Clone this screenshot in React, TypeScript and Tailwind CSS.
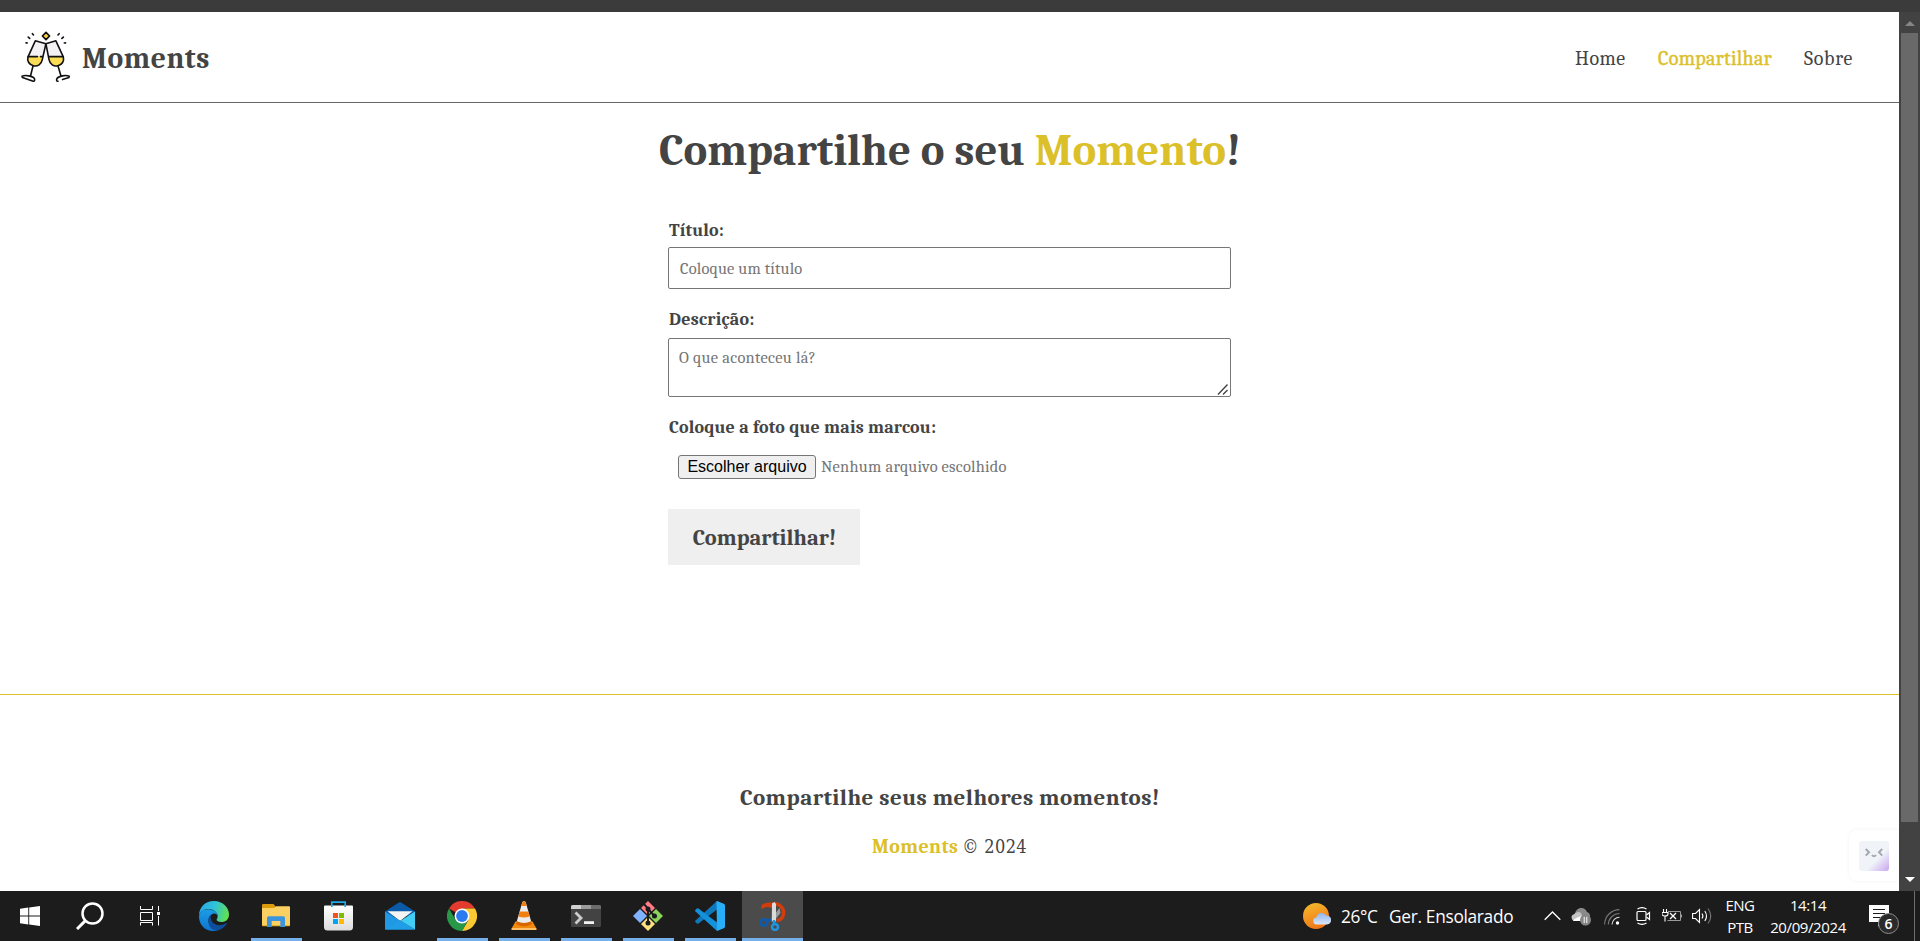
import type { ReactNode } from "react";

function ToastLogo() {
  return (
    <svg width="50" height="52" viewBox="0 0 50 52" fill="none" stroke="#111" strokeWidth="1.6" strokeLinecap="round" strokeLinejoin="round">
      <path d="M25 1.4L28.6 5L25 8.6L21.4 5Z" fill="#f7d23e" strokeWidth="1.7" />
      <path d="M14.3 9.8L25 12.5L21.3 28.6C20.4 33.4 16.6 35.8 12.4 34.8C8.1 33.8 5.9 30 7 25.8Z" fill="#f3f1f3" stroke="none" />
      <path d="M34.9 9.8L24.3 12.5L28 28.6C29 33.4 32.7 35.8 36.9 34.8C41.2 33.8 43.4 30 42.3 25.8Z" fill="#f3f1f3" stroke="none" />
      <path d="M6.9 25.6H21.9C21.8 32 18 35.5 13.4 35C8.7 34.4 6.2 30.6 6.9 25.6Z" fill="#fbdc55" stroke="none" />
      <path d="M27.3 25.6H42.5C43.2 30.6 40.6 34.4 36 35C31.3 35.5 27.5 32 27.3 25.6Z" fill="#fbdc55" stroke="none" />
      <path d="M14.3 9.8L24.9 12.7L21.3 28.6C20.4 33.4 16.6 35.8 12.4 34.8C8.1 33.8 5.9 30 7 25.8Z" />
      <path d="M34.9 9.8L24.9 12.7L28 28.6C29 33.4 32.7 35.8 36.9 34.8C41.2 33.8 43.4 30 42.3 25.8Z" />
      <path d="M7 25.6H16.5M19.5 25.6H21.3M28 25.6H42" />
      <path d="M12 35L9.5 45M37 35L40 45" />
      <path d="M1 45.3C4 43.7 12 45 13.4 47.6C14 49.4 13.5 50.5 12.2 50.2L1.4 46.5Z" />
      <path d="M48.3 45.3C45 43.7 37.5 45 35.9 47.6C35.2 49.4 35.7 50.5 37 50.2M41.5 48.6L48 46.5" />
      <path d="M12.5 4L11.4 2.7M8.7 7.4L7.2 6.1M6.3 12L5 11.9M37 4L38.1 2.7M40.9 7.4L42.4 6.1M43.3 12L44.6 11.9" />
    </svg>
  );
}

function StartIcon() {
  return (
    <svg width="20" height="20" viewBox="0 0 20 20" fill="#fff">
      <path d="M0 2.7L8.3 1.5V9.5H0ZM9.2 1.4L20 0V9.5H9.2ZM0 10.4H8.3V18.5L0 17.3ZM9.2 10.4H20V20L9.2 18.6Z" />
    </svg>
  );
}

function SearchIcon() {
  return (
    <svg width="28" height="28" viewBox="0 0 28 28" fill="none" stroke="#fff" strokeWidth="2.5">
      <circle cx="16.5" cy="11.5" r="10" />
      <path d="M9.4 18.6L1 27" strokeWidth="3" />
    </svg>
  );
}

function TaskViewIcon() {
  return (
    <svg width="20" height="20" viewBox="0 0 20 20" fill="none" stroke="#fff" strokeWidth="1">
      <path d="M.5 0V3.500H12.500V0M.5 6.500H12.500V14.500H.5ZM.5 19.500V16.500H12.500V19.500M18.500 0V5M18.500 10V19.500" />
      <rect x="17" y="6" width="3" height="3" fill="#fff" stroke="none" />
    </svg>
  );
}

function EdgeIcon() {
  return (
    <svg width="30" height="30" viewBox="0 0 30 30">
      <defs>
        <linearGradient id="edgeTop" x1="0" y1="0.3" x2="1" y2="0.5">
          <stop offset="0" stopColor="#2aa7e8" />
          <stop offset=".5" stopColor="#2fc3d8" />
          <stop offset="1" stopColor="#63e04e" />
        </linearGradient>
        <linearGradient id="edgeLeft" x1="0" y1="0" x2="0" y2="1">
          <stop offset="0" stopColor="#1c9ee6" />
          <stop offset="1" stopColor="#0f73cd" />
        </linearGradient>
      </defs>
      <path d="M0 14.500C0 6 6.500 0 15 0C24 0 30 6.500 30 13.500C30 18.500 26.500 21 22.500 21C19.500 21 17.600 20 17.600 18.800C17.600 18 18.700 17.400 18.700 15C18.700 11.500 14.500 8 9.500 8C4.500 8 1 11 0 14.500Z" fill="url(#edgeTop)" />
      <path d="M0 15.500C.5 11 4.500 8.200 9.200 8.200C14.500 8.200 18.500 11.500 18.600 14.800C17.500 12.600 15.500 12 13.800 12.800C10 14.500 8.500 18.500 10 22.500C11.500 26.500 15 29.500 19.500 29.300C8 32.500 0 25 0 15.500Z" fill="url(#edgeLeft)" />
      <path d="M12 13.800C10.500 19.500 14.500 24.200 20 24.200C23.500 24.200 26 23 27.600 22C28.100 21.800 28.300 22.200 28 22.600C25 27.200 20.500 29.600 17.500 29.600C11 29.600 6.500 20 12 13.800Z" fill="#0d4f9c" />
    </svg>
  );
}

function ExplorerIcon() {
  return (
    <svg width="28" height="24" viewBox="0 0 28 24">
      <path d="M0 1.200Q0 0 1.200 0H11.500L13.500 2.500V5H0Z" fill="#dd9b0a" />
      <path d="M0 4H12L14 2.200H27Q28 2.200 28 3.200V21Q28 22 27 22H1Q0 22 0 21Z" fill="#fbd063" />
      <path d="M0 21H28V21.500Q28 22.200 27 22.200H1Q0 22.200 0 21.500Z" fill="#e8b023" />
      <path d="M5 23V14Q5 12.300 6.700 12.300H21.500Q23 12.300 23 14V23H18.300V17H9.700V23Z" fill="#3c95dc" />
    </svg>
  );
}

function StoreIcon() {
  return (
    <svg width="29" height="30" viewBox="0 0 29 30">
      <defs>
        <linearGradient id="bag" x1="0" y1="0" x2="0" y2="1">
          <stop offset="0" stopColor="#fff" />
          <stop offset="1" stopColor="#dcdcdc" />
        </linearGradient>
      </defs>
      <path d="M0 5.500Q0 4.500 1 4.500H28Q29 4.500 29 5.500V26Q29 29.500 25.500 29.500H3.500Q0 29.500 0 26Z" fill="url(#bag)" />
      <path d="M7.800 6V1.200H21.200V6" fill="none" stroke="#20a9e8" strokeWidth="1.7" />
      <path d="M9 12H14V17H9Z" fill="#f25022" />
      <path d="M15 12H20V17H15Z" fill="#7fba00" />
      <path d="M9 18H14V23H9Z" fill="#00a4ef" />
      <path d="M15 18H20V23H15Z" fill="#ffb900" />
    </svg>
  );
}

function MailIcon() {
  return (
    <svg width="30" height="28" viewBox="0 0 30 28">
      <path d="M0 9.500L13.500 .7Q15 -.2 16.500 .7L30 9.500V14H0Z" fill="#0a5aa8" />
      <path d="M2.500 9.200H27.500L15 19Z" fill="#f4f4f4" />
      <path d="M0 9.500L30 27.500H0Z" fill="#2098e4" />
      <path d="M30 9.500V27.500L15.500 18.700Z" fill="#42cdf5" />
      <path d="M0 27.500L15 18.500L30 27.500Z" fill="#1f9de6" />
    </svg>
  );
}

function ChromeIcon() {
  return (
    <svg width="30" height="30" viewBox="0 0 30 30">
      <path d="M15 15L2 7.500A15 15 0 0 1 28 7.500H15Z" fill="#e33b2e" />
      <path d="M15 7.500H28A15 15 0 0 1 15 30L21.500 18.700Z" fill="#fcc934" />
      <path d="M2 7.500L8.500 18.800L15 22L21.400 18.800L15 30A15 15 0 0 1 2 7.500Z" fill="#279847" />
      <circle cx="15" cy="15" r="7.5" fill="#fff" />
      <circle cx="15" cy="15" r="5.9" fill="#2a7bef" />
    </svg>
  );
}

function ConeIcon() {
  return (
    <svg width="26" height="29" viewBox="0 0 26 29">
      <path d="M4.500 20.500H21.500L25.500 27.500Q26 29 24.500 29H1.500Q0 29 .5 27.500Z" fill="#f08a0c" />
      <path d="M1 27H25L25.500 28.500L24.500 29H1.500L.5 28.500Z" fill="#fcc06a" />
      <path d="M13 0Q14.300 0 14.800 1.500L20.500 21.500Q13 26 5.500 21.500L11.200 1.500Q11.700 0 13 0Z" fill="#ececec" />
      <path d="M11.400 1.500Q11.700 0 13 0Q14.300 0 14.700 1.500L15.800 5H10.200Z" fill="#f07f10" />
      <path d="M8.700 10.500H17.300L18.700 15.500Q13 17.500 7.300 15.500Z" fill="#f07f10" />
      <path d="M5.900 20.300Q13 23.500 20.100 20.300L20.900 23Q13 27.500 5.100 23Z" fill="#d96500" />
    </svg>
  );
}

function TerminalIcon() {
  return (
    <svg width="30" height="22" viewBox="0 0 30 22">
      <rect width="30" height="22" rx="1.5" fill="#434343" />
      <path d="M0 4V1.500Q0 0 1.500 0H10V4Z" fill="#d0d0d0" />
      <path d="M10 0H20V4H10Z" fill="#9b9b9b" />
      <path d="M20 0H28.500Q30 0 30 1.500V4H20Z" fill="#6c6c6c" />
      <path d="M4.500 7.500L10 13L4.500 18.500" fill="none" stroke="#ccc" strokeWidth="2.8" />
      <path d="M13 16.200H23V19H13Z" fill="#f2f2f2" />
    </svg>
  );
}

function GitIcon() {
  return (
    <svg width="30" height="30" viewBox="0 0 30 30">
      <path d="M15 0L22 7L15 14L8 7Z" fill="#ff7d85" />
      <path d="M7 8L14 15L7 22L0 15Z" fill="#80b3ff" />
      <path d="M23 8L30 15L23 22L16 15Z" fill="#8bd45c" />
      <path d="M15 16L22 23L15 30L8 23Z" fill="#fee080" />
      <path d="M10.500 2.500L15 7.500V22M15 8L21.500 15" fill="none" stroke="#17191d" strokeWidth="1.9" />
      <circle cx="15" cy="8" r="2.5" fill="#17191d" />
      <circle cx="21.5" cy="15" r="2.5" fill="#17191d" />
      <circle cx="15" cy="22" r="2.5" fill="#17191d" />
    </svg>
  );
}

function CodeIcon() {
  return (
    <svg width="30" height="30" viewBox="0 0 30 30">
      <path d="M22 0V8.500L3.500 22.500Q2.600 23 1.900 22.400L.4 21Q-.3 20.200 .5 19.500Z" fill="#0f78bd" />
      <path d="M22 30V21.500L3.500 7.500Q2.600 7 1.900 7.600L.4 9Q-.3 9.800 .5 10.500Z" fill="#1391da" />
      <path d="M21.500 0H22L28.800 2.700Q30 3.200 30 4.500V25.500Q30 26.800 28.800 27.300L22 30Z" fill="#27aef6" />
    </svg>
  );
}

function SnipIcon() {
  return (
    <svg width="28" height="30" viewBox="0 0 28 30" fill="none">
      <path d="M3.500 4.500Q9 1.500 13 2.800V6Q8 4 3.500 6.500Z" fill="#d33d0b" stroke="#d33d0b" strokeWidth="2" />
      <path d="M13 3C21 1.500 25.500 8 24.500 13.500C23.500 17.500 21 19.500 17.500 19.500" stroke="#d33d0b" strokeWidth="3.4" />
      <path d="M20.500 7L12.500 17.500L15 20L21.500 12Z" fill="#9c9c9c" />
      <path d="M13 2.500L15.500 1L17 3V20.500H12.800Z" fill="#dadada" />
      <circle cx="5" cy="21.5" r="3.2" stroke="#0c5cae" strokeWidth="2.5" />
      <path d="M7.500 20L12 18.500" stroke="#0c5cae" strokeWidth="2.5" />
      <circle cx="16" cy="26" r="3" stroke="#1d96e2" strokeWidth="2.5" />
      <path d="M15 19V23" stroke="#1d96e2" strokeWidth="2.5" />
    </svg>
  );
}

function WeatherIcon() {
  return (
    <svg width="28" height="26" viewBox="0 0 28 26">
      <defs>
        <linearGradient id="sun" x1=".2" y1="0" x2=".6" y2="1">
          <stop offset="0" stopColor="#f5b92c" />
          <stop offset="1" stopColor="#f07318" />
        </linearGradient>
        <linearGradient id="cloud" x1="0" y1="0" x2="0" y2="1">
          <stop offset="0" stopColor="#8fb4ee" />
          <stop offset="1" stopColor="#dbe7fb" />
        </linearGradient>
      </defs>
      <circle cx="13" cy="13" r="13" fill="url(#sun)" />
      <path d="M14 21.500A3.500 3.500 0 0 1 13.500 14.500A5.300 5.300 0 0 1 23.300 12.500A4.500 4.500 0 0 1 24 21.500Z" fill="url(#cloud)" />
    </svg>
  );
}

function PausedCloudIcon() {
  return (
    <svg width="21" height="18" viewBox="0 0 21 18">
      <path d="M4.500 8A6 6 0 0 1 16 4A4 4 0 0 1 17.500 11H8Z" fill="#8a8a8a" />
      <path d="M3.500 13A3.500 3.500 0 0 1 3 6.200A5 5 0 0 1 10 5L13 12.500Z" fill="#c4c4c4" />
      <path d="M2 12.500Q6 8.500 12 8V13H3.500Q2.500 13 2 12.500Z" fill="#fff" />
      <circle cx="14.5" cy="12" r="5.5" fill="#858585" />
      <path d="M13.200 8.800V15M15.800 8.800V15" stroke="#fff" strokeWidth="1" />
    </svg>
  );
}

function WifiIcon() {
  return (
    <svg width="16" height="16" viewBox="0 0 16 16" fill="none" strokeWidth="1.1">
      <path d="M.6 15.500A15 15 0 0 1 15.500 .6M4.300 15.500A11.300 11.300 0 0 1 15.500 4.500" stroke="#777" />
      <path d="M8 15.500A7.500 7.500 0 0 1 15.500 8.300" stroke="#ddd" />
      <circle cx="13.5" cy="14" r="1.7" fill="#fff" />
    </svg>
  );
}

function MeetIcon() {
  return (
    <svg width="15" height="18" viewBox="0 0 15 18" fill="none" stroke="#fff" strokeWidth="1.2">
      <rect x="1" y="4.5" width="9" height="9" rx="1" />
      <path d="M10.500 8L13.500 5.500V12.500L10.500 10M1.500 2Q6 -.8 10.500 2M1.500 16Q6 18.800 10.500 16" />
    </svg>
  );
}

function BatteryIcon() {
  return (
    <svg width="21" height="14" viewBox="0 0 21 14" fill="none">
      <path d="M6 2.500H18.500V11.500H5.500M19.500 5.500V8.500" stroke="#9a9a9a" />
      <path d="M1.500 0V3M4.500 0V3M0 3.500H6V5Q6 7 3 7Q0 7 0 5ZM3 7V12.500" stroke="#fff" strokeWidth="1.1" />
      <path d="M8 4L14 10M14 4L8 10" stroke="#fff" strokeWidth="1.3" />
    </svg>
  );
}

function VolumeIcon() {
  return (
    <svg width="21" height="18" viewBox="0 0 21 18" fill="none" stroke="#fff" strokeWidth="1.1">
      <path d="M.6 6.500H3.500L7.500 2.500V15.500L3.500 11.500H.6ZM10 6.500Q11.800 9 10 11.500M12.800 4Q16.200 9 12.800 14" />
      <path d="M16 1.500Q21.500 9 16 16.500" stroke="#777" />
    </svg>
  );
}

function NotificationIcon() {
  return (
    <svg width="20" height="22" viewBox="0 0 20 22">
      <path d="M0 0H20V17H14L9 21.500V17H0Z" fill="#fff" />
      <path d="M4 4.500H16M4 8.500H16M4 12.500H12" stroke="#1c1c1c" />
    </svg>
  );
}

function TaskButton({ icon, open, active }: { icon: ReactNode; open?: boolean; active?: boolean }) {
  return (
    <div className={`flex h-full flex-col items-center ${active ? "ml-px w-[61px] bg-[#4b4b4b]" : "w-[62px]"}`}>
      <div className="flex h-[47px] items-center justify-center pt-0.5">{icon}</div>
      {open && <div className={`h-[3px] bg-[#76b0ea] ${active ? "w-full" : "w-[51px]"}`} />}
    </div>
  );
}

function Header() {
  return (
    <header className="flex h-[91px] items-center justify-between border-b border-[#666] pr-[46px] pl-[21px]">
      <div className="flex items-center">
        <ToastLogo />
        <span className="ml-[11px] pt-0.5 text-[29.6px] leading-9 font-bold tracking-[0.55px]">Moments</span>
      </div>
      <nav className="flex gap-8 pt-[3px] text-[20px] leading-7">
        <a className="w-[51px] tracking-[0.5px]">Home</a>
        <a className="w-[114px] tracking-[0.35px] text-[#dcc02a] [-webkit-text-stroke:0.4px_#dcc02a]">Compartilhar</a>
        <a className="w-[49px] tracking-[0.7px]">Sobre</a>
      </nav>
    </header>
  );
}

function ShareForm() {
  return (
    <form className="mt-[37px] flex w-[563px] flex-col items-start">
      <label className="ml-px h-6 pt-px text-[18px] leading-6 font-bold tracking-[0.15px]">Título:</label>
      <div className="mt-[5px] flex h-[42px] w-full items-center rounded-[2px] border border-[#767676] px-[11px] pt-0.5 text-[16.4px] tracking-[0.2px] text-[#757575]">
        Coloque um título
      </div>
      <label className="mt-[19px] ml-px h-6 text-[18px] leading-6 font-bold tracking-[0.25px]">Descrição:</label>
      <div className="mt-1.5 flex h-[59px] w-full items-end justify-between rounded-[2px] border border-[#767676] pl-2.5 text-[16.4px] tracking-[0.3px] text-[#757575]">
        <span className="h-full pt-[7px]">O que aconteceu lá?</span>
        <svg width="13" height="13" viewBox="0 0 13 13" stroke="#444" strokeWidth="1.4">
          <path d="M1 11.500L10.500 1.500M6 11.500L10.500 7" />
        </svg>
      </div>
      <label className="mt-[19px] ml-px h-6 text-[18px] leading-6 font-bold tracking-[0.18px]">Coloque a foto que mais marcou:</label>
      <div className="mt-[15px] ml-2.5 flex h-6 items-center gap-[5px]">
        <span className="flex h-6 w-[138px] items-center justify-center rounded-[3px] border border-[#767676] bg-[#efefef] font-['Liberation_Sans',Arial,sans-serif] text-base text-black">
          Escolher arquivo
        </span>
        <span className="text-[16.4px] tracking-[0.25px] text-[#757575]">Nenhum arquivo escolhido</span>
      </div>
      <button type="button" className="mt-[30px] h-14 w-48 bg-[#efefef] pt-[3px] pl-px text-[22.4px] font-bold">
        Compartilhar!
      </button>
    </form>
  );
}

function Scrollbar() {
  return (
    <div className="flex w-[21px] flex-col items-center bg-[#424242]">
      <svg width="10" height="21" viewBox="0 0 10 21">
        <path d="M0 14L5 9L10 14Z" fill="#868686" />
      </svg>
      <div className="h-[789px] w-[17px] bg-[#696969]" />
      <div className="flex-1" />
      <svg width="10" height="17" viewBox="0 0 10 17">
        <path d="M0 3L5 8L10 3Z" fill="#fff" />
      </svg>
    </div>
  );
}

function Taskbar() {
  return (
    <div className="flex h-[50px] bg-[#1c1c1c] font-['Open_Sans','Noto_Sans',sans-serif] text-white">
      <div className="flex items-center">
        <div className="flex w-[60px] justify-center"><StartIcon /></div>
        <div className="flex w-[60px] justify-center"><SearchIcon /></div>
        <div className="flex w-[60px] justify-center"><TaskViewIcon /></div>
      </div>
      <div className="ml-[3px] flex">
        <TaskButton icon={<EdgeIcon />} />
        <TaskButton icon={<ExplorerIcon />} open />
        <TaskButton icon={<StoreIcon />} />
        <TaskButton icon={<MailIcon />} />
        <TaskButton icon={<ChromeIcon />} open />
        <TaskButton icon={<ConeIcon />} open />
        <TaskButton icon={<TerminalIcon />} open />
        <TaskButton icon={<GitIcon />} open />
        <TaskButton icon={<CodeIcon />} open />
        <TaskButton icon={<SnipIcon />} open active />
      </div>
      <div className="ml-auto flex items-center">
        <WeatherIcon />
        <span className="ml-2.5 w-12 pt-0.5 text-[17.3px] tracking-[-0.4px] whitespace-nowrap">26°C</span>
        <span className="w-[155px] pt-0.5 text-[17.3px] tracking-[-0.3px] whitespace-nowrap">Ger. Ensolarado</span>
        <svg width="17" height="10" viewBox="0 0 17 10" fill="none" stroke="#fff" strokeWidth="1.3">
          <path d="M.7 8.700L8.500 1L16.300 8.700" />
        </svg>
        <div className="ml-2.5 flex items-center pt-0.5"><PausedCloudIcon /></div>
        <div className="ml-3 flex items-center pt-0.5"><WifiIcon /></div>
        <div className="ml-4"><MeetIcon /></div>
        <div className="ml-[11px]"><BatteryIcon /></div>
        <div className="ml-[9px]"><VolumeIcon /></div>
        <div className="ml-[9px] flex w-9 flex-col items-center text-[15px] leading-[22.5px] tracking-[-0.5px]">
          <span>ENG</span>
          <span>PTB</span>
        </div>
        <div className="ml-2 flex w-[84px] flex-col items-center text-[15px] leading-[22.5px] tracking-[-0.4px]">
          <span>14:14</span>
          <span>20/09/2024</span>
        </div>
        <div className="relative ml-[19px]">
          <NotificationIcon />
          <span className="absolute top-[8px] left-[9px] flex size-[21px] items-center justify-center rounded-full border border-[#8c8c8c] bg-[#2b2b2b] text-[14px] leading-none font-semibold">
            6
          </span>
        </div>
        <div className="ml-[25px] h-full w-px bg-[#6e6e6e]" />
        <div className="w-[5px]" />
      </div>
    </div>
  );
}

export default function App() {
  return (
    <div className="flex h-[941px] w-[1920px] flex-col overflow-hidden bg-white">
      <div className="h-3 bg-[#3b3b3b]" />
      <div className="flex h-[879px]">
        <div className="relative flex w-[1899px] flex-col font-['Cambria','Caladea','DejaVu_Serif_Condensed',serif] text-[#444]">
          <Header />
          <main className="flex h-[591px] flex-col items-center pt-[18px]">
            <h1 className="h-[60px] pl-px text-[44.8px] leading-[60px] font-bold tracking-[0.04px]">
              Compartilhe o seu <span className="text-[#dcc02a]">Momento</span>!
            </h1>
            <ShareForm />
          </main>
          <footer className="flex flex-1 flex-col items-center border-t border-[#dcc02a] pt-[87px]">
            <h3 className="h-8 pl-px text-[23px] leading-8 font-bold tracking-[0.42px]">Compartilhe seus melhores momentos!</h3>
            <p className="mt-[19px] flex h-7 gap-1 text-[20px] leading-7">
              <span className="font-bold tracking-[0.35px] text-[#dcc02a]">Moments</span>
              <span className="font-['DejaVu_Serif_Condensed',serif] text-[18px] tracking-[0.35px]">© 2024</span>
            </p>
          </footer>
          <div className="absolute right-0 bottom-[10px] flex h-[51px] w-[50px] items-center rounded-l-lg bg-white pl-2.5 shadow-[0_0_4px_rgba(0,0,0,0.05)]">
            <div className="flex size-[30px] justify-center rounded-[3px] bg-linear-135 from-[#f0f4f8] from-60% to-[#c9a5f0] pt-[7px]">
              <svg width="18" height="10" viewBox="0 0 18 10" fill="none" stroke="#a3a7b0" strokeWidth="2">
                <path d="M.8 1L4 4.300L.8 7.600M17.200 1L14 4.300L17.200 7.600M7 7Q9 9.500 11 7" />
              </svg>
            </div>
          </div>
        </div>
        <Scrollbar />
      </div>
      <Taskbar />
    </div>
  );
}
